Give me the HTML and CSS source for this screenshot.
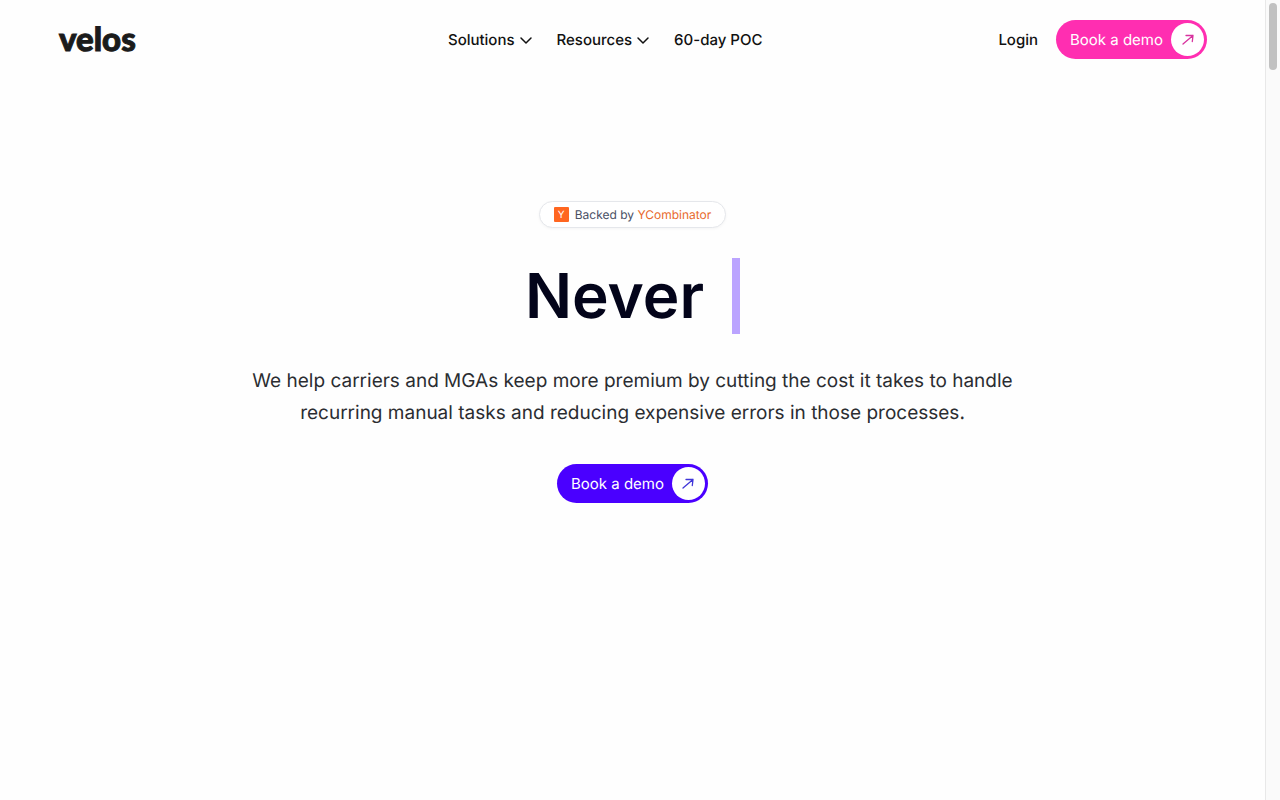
FILE: index.html
```html
<!DOCTYPE html>
<html lang="en">
<head>
<meta charset="utf-8">
<meta name="viewport" content="width=device-width, initial-scale=1">
<title>Velos</title>
<link rel="stylesheet" href="styles.css">
</head>
<body>
<div class="page">
  <header class="header">
    <div class="brand"><a class="logo" href="#">velos</a></div>
    <nav class="nav" aria-label="Main">
      <button class="nav-item" type="button">Solutions
        <svg class="chevron" viewBox="0 0 14 14" aria-hidden="true"><path d="M2 5l5 5 5-5"/></svg>
      </button>
      <button class="nav-item" type="button">Resources
        <svg class="chevron" viewBox="0 0 14 14" aria-hidden="true"><path d="M2 5l5 5 5-5"/></svg>
      </button>
      <a class="nav-item" href="#">60-day POC</a>
    </nav>
    <div class="actions">
      <a class="nav-item" href="#">Login</a>
      <a class="cta cta-pink" href="#">Book a demo
        <span class="cta-icon"><svg viewBox="0 0 14 14" aria-hidden="true"><path d="M2 11L12 2.500M5 2.500h7l-.7 6"/></svg></span>
      </a>
    </div>
  </header>
  <main class="hero">
    <p class="badge"><span class="yc">Y</span><span>Backed by <a class="yc-link" href="#">YCombinator</a></span></p>
    <h1 class="title">Never<span class="cursor"></span></h1>
    <p class="lead">We help carriers and MGAs keep more premium by cutting the cost it takes to handle recurring manual tasks and reducing expensive errors in those processes.</p>
    <a class="cta cta-violet" href="#">Book a demo
      <span class="cta-icon"><svg viewBox="0 0 14 14" aria-hidden="true"><path d="M2 11L12 2.500M5 2.500h7l-.7 6"/></svg></span>
    </a>
  </main>
</div>
<div class="scroll-rail" aria-hidden="true"><div class="scroll-thumb"></div></div>
</body>
</html>
```
FILE: styles.css
```css
* { box-sizing: border-box; }
body {
  margin: 0;
  min-height: 100vh;
  display: flex;
  background: #fefefe;
  color: #111;
  font-family: Inter, "Liberation Sans", sans-serif;
  text-rendering: geometricPrecision;
}
a { color: inherit; text-decoration: none; }
.page { flex: 1; min-width: 0; }
.header {
  display: flex;
  align-items: center;
  height: 79px;
  padding: 0 58px 0 59px;
}
.brand, .actions { display: flex; align-items: center; }
.brand { flex: 7; }
.actions { flex: 8; justify-content: flex-end; gap: 18px; }
.logo {
  padding-bottom: 2px;
  font: 900 33px/36px Lato, sans-serif;
  color: #1b1b1b;
  -webkit-text-stroke: 1px #1b1b1b;
}
.nav { display: flex; align-items: center; gap: 24px; }
.nav-item {
  display: flex;
  align-items: center;
  gap: 4px;
  padding: 0;
  border: 0;
  background: none;
  color: #111;
  font: 500 15px/24px Inter, sans-serif;
  text-rendering: inherit;
  cursor: pointer;
}
.chevron { width: 14px; height: 14px; fill: none; stroke: #111; stroke-width: 1.5; stroke-linecap: round; stroke-linejoin: round; }
.cta {
  display: inline-flex;
  align-items: center;
  gap: 8px;
  height: 39px;
  padding: 0 3px 0 14px;
  border-radius: 20px;
  color: #fff;
  font-size: 15px;
  font-weight: 400;
}
.cta-icon {
  display: grid;
  place-items: center;
  width: 33px;
  height: 33px;
  border-radius: 50%;
  background: #fff;
}
.cta-icon svg { width: 14px; height: 14px; fill: none; stroke: currentColor; stroke-width: 1.3; stroke-linecap: round; stroke-linejoin: round; }
.cta-pink { background: #ff2eb1; }
.cta-pink .cta-icon { color: #d8339f; }
.cta-violet { background: #4a00ff; }
.cta-violet .cta-icon { color: #4036d8; }
.hero {
  display: flex;
  flex-direction: column;
  align-items: center;
  padding: 122px 24px 0;
  text-align: center;
}
.badge {
  display: flex;
  align-items: center;
  gap: 6px;
  height: 27px;
  margin: 0;
  padding: 0 14px;
  border: 1px solid #e5e7eb;
  border-radius: 14px;
  background: #fff;
  box-shadow: 0 1px 3px rgba(0, 0, 0, .04);
  color: #4a5065;
  font-size: 12px;
}
.yc {
  width: 15px;
  height: 15px;
  border-radius: 1px;
  background: #ff6620;
  color: #fff;
  font-size: 10px;
  line-height: 16px;
}
.yc-link { color: #e8692c; }
.title {
  display: flex;
  align-items: center;
  gap: 28px;
  margin: 30px 0 0;
  color: #03041a;
  font-size: 62px;
  font-weight: 600;
  line-height: 76px;
}
.cursor { width: 8px; height: 76px; background: #bba4ff; }
.lead {
  max-width: 768px;
  margin: 31px 0 35px;
  color: #2b2d31;
  font-size: 19px;
  line-height: 32px;
}
.scroll-rail { width: 15px; padding: 3px; border-left: 1px solid #e8e8e8; background: #fafafa; }
.scroll-thumb { width: 8px; height: 67px; border-radius: 4px; background: #c1c1c1; }
```
